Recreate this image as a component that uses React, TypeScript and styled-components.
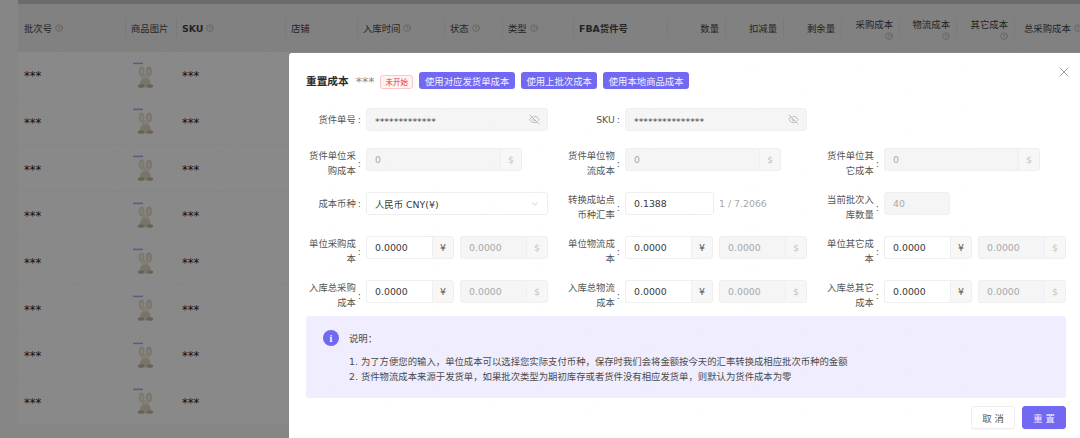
import React from "react";
import styled, { createGlobalStyle } from "styled-components";
import { CircleHelp, EyeOff, ChevronDown, X } from "lucide-react";

const FONT = `"DejaVu Sans", "Noto Sans CJK SC", sans-serif`;
const COLUMNS = "107px 51px 109px 72px 87px 58px 71px 94px 58px 58px 58px 58px 57px 58px 66px";

const GlobalStyle = createGlobalStyle`
  html, body {
    margin: 0;
    padding: 0;
    background: #f4f4f4;
  }
  body {
    font-family: ${FONT};
    font-size: 9.37px;
  }
`;

const styles = {
  Page: styled.div`
    position: relative;
    width: 1080px;
    height: 438px;
    overflow: hidden;
    padding-left: 18px;
    box-sizing: border-box;
  `,
  TopBar: styled.div`
    height: 4px;
    background: #c4c4c4;
  `,
  HeaderRow: styled.div`
    display: grid;
    grid-template-columns: ${COLUMNS};
    height: 48px;
    background: #ececec;
    align-items: center;
  `,
  HeaderCell: styled.div<{ $right?: boolean; $bold?: boolean }>`
    display: flex;
    flex-wrap: wrap;
    align-items: center;
    align-content: center;
    justify-content: ${props => (props.$right ? "flex-end" : "flex-start")};
    column-gap: 3px;
    padding: 0 6px 0 5px;
    height: 18px;
    line-height: 15px;
    color: #444;
    font-weight: ${props => (props.$bold ? 700 : 400)};
    border-left: 1px solid #dedede;
    white-space: nowrap;
    svg {
      color: #8f8f8f;
      flex: none;
    }
    &:first-child {
      border-left: 0;
      padding-left: 6px;
    }
    &:last-child {
      flex-wrap: nowrap;
      padding: 0 0 0 9px;
    }
  `,
  Row: styled.div`
    display: grid;
    grid-template-columns: ${COLUMNS};
    height: 46.67px;
    box-sizing: border-box;
    background: #fafafa;
    border-bottom: 1px solid #f4f4f4;
    align-items: center;
  `,
  Stars: styled.div`
    padding: 3px 0 0 6px;
    color: #222;
    font-size: 11.5px;
  `,
  Thumb: styled.div`
    display: flex;
    padding-left: 8px;
  `,
  Mask: styled.div`
    position: absolute;
    inset: 0;
    background: rgba(0, 0, 0, 0.45);
  `,
  Modal: styled.div`
    position: absolute;
    left: 289px;
    top: 53px;
    width: 791px;
    height: 385px;
    box-sizing: border-box;
    padding: 19px 14px 0 17px;
    background: #fff;
    border-radius: 3px 0 0 0;
    color: #444;
  `,
  TitleRow: styled.div`
    display: flex;
    align-items: center;
    height: 17px;
    margin-bottom: 19px;
  `,
  Title: styled.div`
    font-size: 10.67px;
    font-weight: 600;
    color: #2b2b2b;
  `,
  TitleStars: styled.div`
    margin-left: 7px;
    padding-top: 2px;
    width: 24.5px;
    color: #888;
    font-size: 12.5px;
    white-space: nowrap;
  `,
  Tag: styled.div`
    box-sizing: border-box;
    display: flex;
    align-items: center;
    justify-content: center;
    width: 33px;
    height: 14px;
    margin-top: 2px;
    border: 1px solid #fbc6c6;
    border-radius: 3px;
    background: #fff3f3;
    color: #e5383b;
    font-size: 7.5px;
  `,
  ActionButton: styled.div<{ $w: number }>`
    display: flex;
    align-items: center;
    justify-content: center;
    width: ${props => props.$w}px;
    height: 17px;
    margin-left: 6px;
    border-radius: 3px;
    background: #7268f2;
    color: #f2f1ff;
  `,
  Close: styled.div`
    position: absolute;
    right: 8px;
    top: 11px;
    display: flex;
    color: #7c7c7c;
  `,
  FormRow: styled.div<{ $h: number }>`
    display: grid;
    grid-template-columns: repeat(3, 242px);
    column-gap: 17px;
    height: ${props => props.$h}px;
    margin-bottom: 14px;
  `,
  Field: styled.div`
    display: flex;
    align-items: flex-start;
    min-width: 0;
  `,
  Label: styled.div`
    display: flex;
    align-items: center;
    justify-content: flex-end;
    flex: none;
    width: 53px;
    min-height: 23px;
    margin-right: 7px;
    color: #555;
    line-height: 15px;
  `,
  LabelText: styled.div`
    max-width: 48px;
    text-align: right;
  `,
  Colon: styled.span`
    margin-left: 2px;
    margin-right: -2px;
  `,
  Input: styled.div<{ $w?: number; $off?: boolean }>`
    display: flex;
    align-items: center;
    justify-content: space-between;
    box-sizing: border-box;
    width: ${props => (props.$w ? `${props.$w}px` : "auto")};
    flex: ${props => (props.$w ? "none" : 1)};
    height: 23px;
    padding: 0 8px;
    border: 1px solid ${props => (props.$off ? "#efefef" : "#eeeeee")};
    border-radius: 3px;
    background: ${props => (props.$off ? "#f5f5f5" : "#fff")};
    color: ${props => (props.$off ? "#a8a8a8" : "#3a3a3a")};
    svg {
      color: #a0a0a0;
      flex: none;
      margin-right: -1px;
    }
  `,
  Masked: styled.span`
    padding-top: 3px;
    color: #444;
  `,
  Group: styled.div<{ $w: number }>`
    display: flex;
    flex: none;
    width: ${props => props.$w}px;
    margin-right: 6px;
    &:last-child {
      margin-right: 0;
    }
  `,
  GroupInput: styled.div<{ $off?: boolean }>`
    display: flex;
    align-items: center;
    box-sizing: border-box;
    flex: 1;
    height: 23px;
    padding: 0 8px;
    border: 1px solid #efefef;
    border-right: 0;
    border-radius: 3px 0 0 3px;
    background: ${props => (props.$off ? "#f5f5f5" : "#fff")};
    color: ${props => (props.$off ? "#a8a8a8" : "#3a3a3a")};
  `,
  Addon: styled.div<{ $off?: boolean }>`
    display: flex;
    align-items: center;
    justify-content: center;
    box-sizing: border-box;
    flex: none;
    width: 22px;
    height: 23px;
    border: 1px solid #efefef;
    border-radius: 0 3px 3px 0;
    background: #f7f7f7;
    color: ${props => (props.$off ? "#c4c4c4" : "#555")};
  `,
  Hint: styled.div`
    margin-left: 5px;
    line-height: 23px;
    color: #a8a8a8;
  `,
  Notice: styled.div`
    box-sizing: border-box;
    height: 82px;
    margin-top: -8px;
    padding: 14px 17px;
    border-radius: 3px;
    background: #f0eefe;
    color: #4a4a4a;
    line-height: 15px;
  `,
  NoticeHead: styled.div`
    display: flex;
    align-items: center;
    height: 16px;
    margin-bottom: 8px;
  `,
  NoticeIcon: styled.div`
    display: flex;
    align-items: center;
    justify-content: center;
    width: 16px;
    height: 16px;
    margin-right: 10px;
    border-radius: 50%;
    background: #7268f2;
    color: #fff;
    font-size: 10px;
    font-weight: 700;
    font-family: "Liberation Serif", serif;
  `,
  NoticeLine: styled.div`
    padding-left: 26px;
  `,
  Footer: styled.div`
    display: flex;
    justify-content: flex-end;
    gap: 7px;
    margin-top: 8px;
  `,
  FooterButton: styled.div<{ $primary?: boolean }>`
    display: flex;
    align-items: center;
    justify-content: center;
    box-sizing: border-box;
    width: 44px;
    height: 23px;
    border: 1px solid ${props => (props.$primary ? "#7268f2" : "#eeeeee")};
    border-radius: 3px;
    background: ${props => (props.$primary ? "#7268f2" : "#fff")};
    color: ${props => (props.$primary ? "#f2f1ff" : "#555")};
    box-shadow: 0 1px 1px rgba(0, 0, 0, 0.03);
  `,
  Watermarks: styled.div`
    position: absolute;
    inset: 0;
    pointer-events: none;
  `,
  Watermark: styled.span`
    position: absolute;
    font-size: 8.5px;
    color: rgba(0, 0, 0, 0.035);
    transform: translate(-50%, -50%) rotate(-20deg);
  `
};

const Help = () => <CircleHelp size={8} strokeWidth={1.5} />;

const headers: { text: string; help?: boolean; right?: boolean; bold?: boolean }[] = [
  { text: "批次号", help: true },
  { text: "商品图片" },
  { text: "SKU", help: true, bold: true },
  { text: "店铺" },
  { text: "入库时间", help: true },
  { text: "状态", help: true },
  { text: "类型", help: true },
  { text: "FBA货件号", bold: true },
  { text: "数量", right: true },
  { text: "扣减量", right: true },
  { text: "剩余量", right: true },
  { text: "采购成本", help: true, right: true },
  { text: "物流成本", help: true, right: true },
  { text: "其它成本", help: true, right: true },
  { text: "总采购成本", help: true }
];

const Rabbit = () => (
  <svg width="22" height="26" viewBox="0 0 22 26">
    <rect x="0" y="0.6" width="10" height="1.6" fill="#a8a8f6" />
    <ellipse cx="8.6" cy="9.4" rx="2.9" ry="4.8" fill="#e2dac9" />
    <ellipse cx="8.6" cy="9.4" rx="1.3" ry="3" fill="#f1ece2" />
    <ellipse cx="16" cy="9.4" rx="2.9" ry="4.8" fill="#ddd4c2" />
    <ellipse cx="16" cy="9.4" rx="1.3" ry="3" fill="#eee8dc" />
    <ellipse cx="12.4" cy="15.4" rx="3.8" ry="3.4" fill="#ebe5d8" />
    <ellipse cx="12.4" cy="21" rx="5.4" ry="4.6" fill="#dcd3c1" />
    <ellipse cx="8" cy="24" rx="3.2" ry="1.8" fill="#bdb19a" />
    <ellipse cx="17" cy="24" rx="3.2" ry="1.8" fill="#bdb19a" />
  </svg>
);

const Label = ({ text }: { text: string }) => (
  <styles.Label>
    <styles.LabelText>{text}</styles.LabelText>
    <styles.Colon>:</styles.Colon>
  </styles.Label>
);

const Secret = ({ label, value }: { label: string; value: string }) => (
  <styles.Field>
    <Label text={label} />
    <styles.Input $off>
      <styles.Masked>{value}</styles.Masked>
      <EyeOff size={11} strokeWidth={1.4} />
    </styles.Input>
  </styles.Field>
);

const UnitCost = ({ label }: { label: string }) => (
  <styles.Field>
    <Label text={label} />
    <styles.Group $w={156}>
      <styles.GroupInput $off>0</styles.GroupInput>
      <styles.Addon $off>$</styles.Addon>
    </styles.Group>
  </styles.Field>
);

const Converted = ({ label }: { label: string }) => (
  <styles.Field>
    <Label text={label} />
    <styles.Group $w={88}>
      <styles.GroupInput>0.0000</styles.GroupInput>
      <styles.Addon>¥</styles.Addon>
    </styles.Group>
    <styles.Group $w={88}>
      <styles.GroupInput $off>0.0000</styles.GroupInput>
      <styles.Addon $off>$</styles.Addon>
    </styles.Group>
  </styles.Field>
);

// only the marks that fit the page whole
const watermarks: { x: number; y: number }[] = [];
for (let col = -9; col < 3; col++) {
  for (let row = -1; row < 11; row++) {
    watermarks.push({ x: 857 + col * 105, y: 70 + row * 40 });
    watermarks.push({ x: 910 + col * 105, y: 88 + row * 40 });
  }
}
const visibleMarks = watermarks.filter(w => w.x > 18 && w.x < 1060 && w.y > 12 && w.y < 426);

export default function App() {
  return (
    <styles.Page>
      <GlobalStyle />
      <styles.TopBar />
      <styles.HeaderRow>
        {headers.map(h => (
          <styles.HeaderCell key={h.text} $right={h.right} $bold={h.bold}>
            {h.text}
            {h.help && <Help />}
          </styles.HeaderCell>
        ))}
      </styles.HeaderRow>
      {[0, 1, 2, 3, 4, 5, 6, 7].map(i => (
        <styles.Row key={i}>
          <styles.Stars>***</styles.Stars>
          <styles.Thumb>
            <Rabbit />
          </styles.Thumb>
          <styles.Stars>***</styles.Stars>
        </styles.Row>
      ))}
      <styles.Mask />

      <styles.Modal>
        <styles.Close>
          <X size={16} strokeWidth={1.1} />
        </styles.Close>
        <styles.TitleRow>
          <styles.Title>重置成本</styles.Title>
          <styles.TitleStars>***</styles.TitleStars>
          <styles.Tag>未开始</styles.Tag>
          <styles.ActionButton $w={96}>使用对应发货单成本</styles.ActionButton>
          <styles.ActionButton $w={76}>使用上批次成本</styles.ActionButton>
          <styles.ActionButton $w={86}>使用本地商品成本</styles.ActionButton>
        </styles.TitleRow>

        <styles.FormRow $h={26}>
          <Secret label="货件单号" value="*************" />
          <Secret label="SKU" value="***************" />
        </styles.FormRow>
        <styles.FormRow $h={30}>
          <UnitCost label="货件单位采购成本" />
          <UnitCost label="货件单位物流成本" />
          <UnitCost label="货件单位其它成本" />
        </styles.FormRow>
        <styles.FormRow $h={30}>
          <styles.Field>
            <Label text="成本币种" />
            <styles.Input>
              人民币 CNY(¥)
              <ChevronDown size={10} strokeWidth={1.2} />
            </styles.Input>
          </styles.Field>
          <styles.Field>
            <Label text="转换成站点币种汇率" />
            <styles.Input $w={89}>0.1388</styles.Input>
            <styles.Hint>1 / 7.2066</styles.Hint>
          </styles.Field>
          <styles.Field>
            <Label text="当前批次入库数量" />
            <styles.Input $w={66} $off>
              40
            </styles.Input>
          </styles.Field>
        </styles.FormRow>
        <styles.FormRow $h={30}>
          <Converted label="单位采购成本" />
          <Converted label="单位物流成本" />
          <Converted label="单位其它成本" />
        </styles.FormRow>
        <styles.FormRow $h={30}>
          <Converted label="入库总采购成本" />
          <Converted label="入库总物流成本" />
          <Converted label="入库总其它成本" />
        </styles.FormRow>

        <styles.Notice>
          <styles.NoticeHead>
            <styles.NoticeIcon>i</styles.NoticeIcon>
            说明：
          </styles.NoticeHead>
          <styles.NoticeLine>
            1. 为了方便您的输入，单位成本可以选择您实际支付币种，保存时我们会将金额按今天的汇率转换成相应批次币种的金额
          </styles.NoticeLine>
          <styles.NoticeLine>
            2. 货件物流成本来源于发货单，如果批次类型为期初库存或者货件没有相应发货单，则默认为货件成本为零
          </styles.NoticeLine>
        </styles.Notice>

        <styles.Footer>
          <styles.FooterButton>取 消</styles.FooterButton>
          <styles.FooterButton $primary>重 置</styles.FooterButton>
        </styles.Footer>
      </styles.Modal>

      <styles.Watermarks>
        {visibleMarks.map((w, i) => (
          <styles.Watermark key={i} style={{ left: w.x, top: w.y }}>
            89420
          </styles.Watermark>
        ))}
      </styles.Watermarks>
    </styles.Page>
  );
}
